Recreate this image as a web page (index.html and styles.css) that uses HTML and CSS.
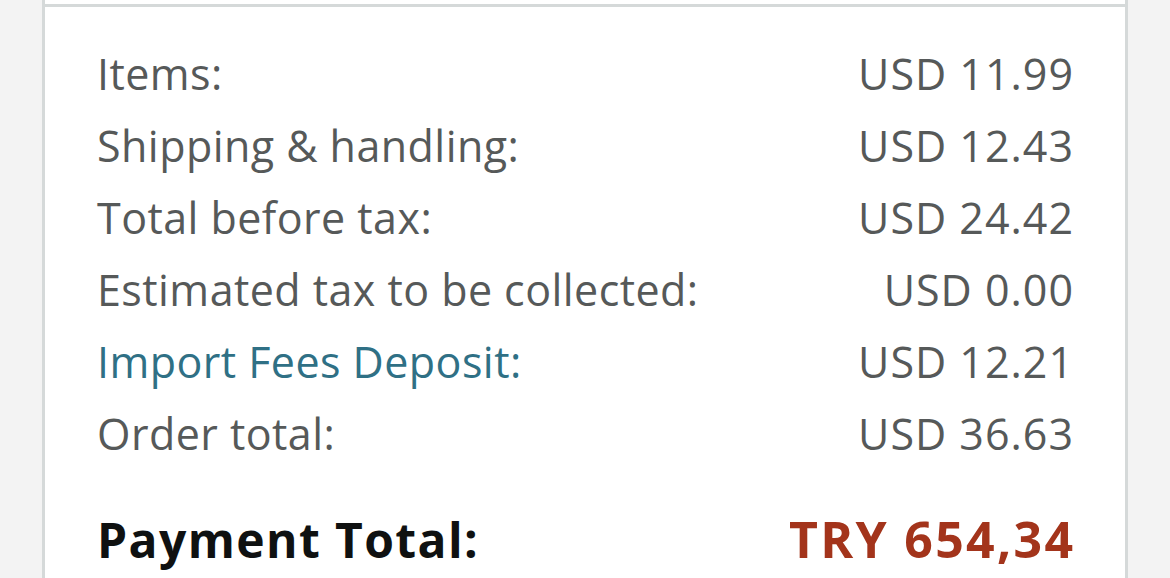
FILE: index.html
```html
<!DOCTYPE html>
<html>
<head>
<meta charset="utf-8">
<link rel="stylesheet" href="styles.css">
</head>
<body>
<div class="page">
  <div class="card">
    <div class="divider"></div>
    <div class="summary">
      <div class="row"><span class="label">Items:</span><span class="value">USD 11.99</span></div>
      <div class="row"><span class="label">Shipping &amp; handling:</span><span class="value">USD 12.43</span></div>
      <div class="row"><span class="label">Total before tax:</span><span class="value">USD 24.42</span></div>
      <div class="row"><span class="label">Estimated tax to be collected:</span><span class="value">USD 0.00</span></div>
      <div class="row"><a class="label link" href="#">Import Fees Deposit:</a><span class="value">USD 12.21</span></div>
      <div class="row"><span class="label">Order total:</span><span class="value">USD 36.63</span></div>
      <div class="row total"><span class="label">Payment Total:</span><span class="value price">TRY 654,34</span></div>
    </div>
  </div>
</div>
</body>
</html>
```

FILE: styles.css
```css
html, body {
  margin: 0;
  padding: 0;
  background: #f3f3f3;
  height: 100%;
  overflow: hidden;
}
.page {
  padding-left: 42px;
  width: 1086px;
  height: 100%;
}
.card {
  background: #ffffff;
  border-left: 3px solid #d5d9d9;
  border-right: 3px solid #d5d9d9;
  height: 100%;
  padding-top: 4px;
  box-sizing: border-box;
}
.divider {
  height: 3px;
  background: #d5d9d9;
}
.summary {
  padding: 31px 52px 0 52px;
  font-family: "Open Sans", "Noto Sans", sans-serif;
  font-size: 43px;
  line-height: 72px;
  color: #565959;
}
.row {
  display: flex;
  justify-content: space-between;
  align-items: baseline;
  white-space: nowrap;
}
.label {
  letter-spacing: 0.45px;
}
.value {
  letter-spacing: 1px;
  margin-right: -1px;
}
.link {
  color: #2f7085;
  text-decoration: none;
}
.total {
  margin-top: 33px;
  font-size: 48px;
  font-weight: 700;
  color: #0f1111;
}
.total .label {
  letter-spacing: 1.4px;
}
.total .value {
  font-size: 50px;
  letter-spacing: 2.3px;
  margin-right: -2.3px;
}
.price {
  color: #a3341b;
}
```
